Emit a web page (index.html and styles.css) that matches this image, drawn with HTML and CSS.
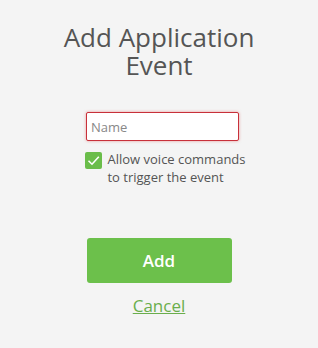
FILE: index.html
```html
<!DOCTYPE html>
<html>
<head>
<meta charset="utf-8">
<link rel="stylesheet" href="styles.css">
</head>
<body>
<div class="dialog">
  <h1 class="title"><span class="title-line">Add Application</span><span class="title-line">Event</span></h1>
  <input class="name-input" type="text" placeholder="Name">
  <label class="check-row">
    <span class="check-box">
      <svg width="17" height="17" viewBox="0 0 17 17"><path d="M3.5 8.8 L7 12.2 L13.8 4.8" fill="none" stroke="#fff" stroke-width="1.6"/></svg>
    </span>
    <span class="check-text">Allow voice commands<br>to trigger the event</span>
  </label>
  <button class="add-btn">Add</button>
  <a class="cancel" href="#">Cancel</a>
</div>
</body>
</html>
```
FILE: styles.css
```css
html, body {
  margin: 0;
  padding: 0;
  background: #f4f4f4;
  width: 318px;
  height: 348px;
  overflow: hidden;
}
.dialog {
  display: flex;
  flex-direction: column;
  align-items: center;
  font-family: "Open Sans", "Noto Sans", sans-serif;
  color: #555;
}
.title {
  margin: 23px 0 0 0;
  font-weight: 400;
  font-size: 26px;
  text-align: center;
  color: #555;
  display: flex;
  flex-direction: column;
  align-items: center;
}
.title-line {
  display: block;
  height: 28px;
  line-height: 28px;
}
.name-input {
  box-sizing: border-box;
  margin-top: 33px;
  margin-left: 7px;
  width: 153px;
  height: 29px;
  border: 1px solid #c8303a;
  border-radius: 2px;
  box-shadow: 0 0 3px rgba(220, 60, 60, 0.5);
  background: #fff;
  padding: 0 4px;
  font-family: inherit;
  font-size: 13px;
  color: #444;
  outline: none;
}
.name-input::placeholder {
  color: #888;
}
.check-row {
  display: flex;
  align-items: flex-start;
  gap: 5px;
  margin-top: 9px;
  margin-left: 13px;
}
.check-box {
  width: 17px;
  height: 17px;
  border-radius: 2px;
  background: #6abd4a;
  display: block;
  margin-top: 2px;
}
.check-box svg { display: block; }
.check-text {
  font-size: 13px;
  line-height: 18px;
  color: #555;
}
.add-btn {
  margin-top: 52px;
  width: 145px;
  height: 45px;
  border: none;
  border-radius: 3px;
  background: #6cc04b;
  color: #fff;
  font-family: inherit;
  font-size: 17px;
  font-weight: 600;
}
.cancel {
  margin-top: 11px;
  font-size: 17px;
  color: #6aae4c;
  text-decoration: underline;
}
```
